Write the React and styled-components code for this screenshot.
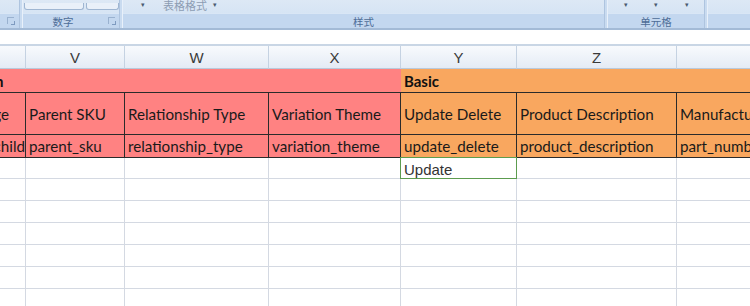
import React from "react";
import styled, { createGlobalStyle } from "styled-components";

const GlobalStyle = createGlobalStyle`
  html, body {
    margin: 0;
    padding: 0;
    background: #ffffff;
    overflow: hidden;
  }
  body {
    font-family: "Lato", "Liberation Sans", sans-serif;
  }
`;

const columns = [
  { letter: "", width: 26 },
  { letter: "V", width: 99 },
  { letter: "W", width: 144 },
  { letter: "X", width: 132 },
  { letter: "Y", width: 116 },
  { letter: "Z", width: 160 },
  { letter: "", width: 120 },
];

// the first column only shows the tail of text spilling from further left
const labels = [
  { text: "age", tail: 16, tone: "pink" },
  { text: "Parent SKU", tone: "pink" },
  { text: "Relationship Type", tone: "pink" },
  { text: "Variation Theme", tone: "pink" },
  { text: "Update Delete", tone: "orange" },
  { text: "Product Description", tone: "orange" },
  { text: "Manufacturer Part Number", tone: "orange" },
];

const keys = [
  { text: "child", tail: 0, tone: "pink" },
  { text: "parent_sku", tone: "pink" },
  { text: "relationship_type", tone: "pink" },
  { text: "variation_theme", tone: "pink" },
  { text: "update_delete", tone: "orange" },
  { text: "product_description", tone: "orange" },
  { text: "part_number", tone: "orange" },
];

const blankRows = [21, 22, 22, 22, 22, 22, 22];

const fills = {
  pink: "#ff8282",
  orange: "#f9a75f",
};

const Page = styled.div`
  width: 750px;
  height: 306px;
  overflow: hidden;
  background: #ffffff;
`;

const Ribbon = styled.div`
  display: flex;
  height: 28px;
  background: #c9dbf0;
  border-bottom: 2px solid #a3bad6;
  overflow: hidden;
`;

const Group = styled.div`
  display: flex;
  flex-direction: column;
  width: ${(p) => p.$w}px;
  flex-shrink: 0;
  margin-right: 2px;
  border-right: 1px solid #aec4df;
  border-left: ${(p) => (p.$first ? "none" : "1px solid #e8f0fa")};
  background: linear-gradient(#dde8f5, #cfe0f3);
`;

const GroupBody = styled.div`
  position: relative;
  height: 13px;
  display: flex;
  align-items: flex-end;
  padding-left: ${(p) => p.$pad || 0}px;
  gap: 2px;
  overflow: hidden;
`;

const GroupLabel = styled.div`
  height: 14px;
  display: flex;
  align-items: center;
  justify-content: center;
  padding-right: ${(p) => p.$pr || 0}px;
  position: relative;
  background: #c3d7ef;
  border-top: 1px solid #d9e6f5;
  font-family: "Noto Sans CJK SC", "Noto Sans", sans-serif;
  font-size: 10.5px;
  color: #4e6d97;
`;

const Launcher = styled.span`
  position: absolute;
  right: ${(p) => p.$r}px;
  top: 3px;
  width: 6px;
  height: 6px;
  border-left: 1px solid #8fa8c8;
  border-top: 1px solid #8fa8c8;
  opacity: 0.8;
  &::after {
    content: "";
    position: absolute;
    right: -1px;
    bottom: -1px;
    width: 3px;
    height: 3px;
    border-right: 1px solid #6f8db5;
    border-bottom: 1px solid #6f8db5;
  }
`;

const MiniBox = styled.div`
  width: ${(p) => p.$w}px;
  height: 6px;
  margin-bottom: 3px;
  border: 1px solid #9fb6d2;
  border-top: none;
  border-radius: 0 0 3px 3px;
  background: #e9f0f9;
`;

const FadedText = styled.span`
  font-family: "Noto Sans CJK SC", "Noto Sans", sans-serif;
  font-size: 11px;
  line-height: 11px;
  color: #8d9db3;
  margin-bottom: 2px;
  margin-left: ${(p) => p.$ml || 0}px;
`;

const Caret = styled.span`
  font-size: 7px;
  line-height: 7px;
  color: #4a5a70;
  position: absolute;
  top: 1px;
  left: ${(p) => p.$x}px;
`;

const Gap = styled.div`
  height: 14px;
  background: #ffffff;
  border-bottom: 2px solid #c9d6e5;
`;

const Row = styled.div`
  display: flex;
  height: ${(p) => p.$h}px;
`;

const HeaderCell = styled.div`
  box-sizing: border-box;
  flex-shrink: 0;
  width: ${(p) => p.$w}px;
  height: 100%;
  display: flex;
  align-items: center;
  justify-content: center;
  background: linear-gradient(#f8fafd, #e4ebf5);
  border-right: 1px solid #c5d2e2;
  border-bottom: 1px solid #b9c9db;
  font-family: "Liberation Sans", sans-serif;
  font-size: 15px;
  color: #3a3a3a;
`;

const Band = styled.div`
  box-sizing: border-box;
  flex-shrink: 0;
  width: ${(p) => p.$w}px;
  height: 100%;
  display: flex;
  align-items: center;
  padding-left: 3px;
  background: ${(p) => fills[p.$tone]};
  border-bottom: 1px solid #2b2b2b;
  font-weight: 700;
  font-size: 15px;
  color: #111;
  white-space: nowrap;
  overflow: hidden;
`;

const Spill = styled.span`
  margin-left: ${(p) => p.$shift}px;
`;

const Cell = styled.div`
  box-sizing: border-box;
  flex-shrink: 0;
  width: ${(p) => p.$w}px;
  height: 100%;
  display: flex;
  align-items: center;
  justify-content: ${(p) => (p.$tail !== undefined ? "flex-end" : "flex-start")};
  padding-left: ${(p) => (p.$tail !== undefined ? 0 : 3)}px;
  padding-right: ${(p) => p.$tail || 0}px;
  background: ${(p) => fills[p.$tone]};
  border-right: 1px solid #2b2b2b;
  border-bottom: 1px solid #2b2b2b;
  font-size: 15.2px;
  color: #1a1a1a;
  white-space: nowrap;
  overflow: hidden;
`;

const GridCell = styled.div`
  box-sizing: border-box;
  flex-shrink: 0;
  width: ${(p) => p.$w}px;
  height: 100%;
  display: flex;
  align-items: center;
  padding: 2px 0 0 3px;
  border-right: 1px solid #d4d9e2;
  border-bottom: 1px solid #d4d9e2;
  font-family: "Liberation Sans", sans-serif;
  font-size: 15px;
  color: #333;
`;

const ActiveCell = styled(GridCell)`
  width: ${(p) => p.$w + 1}px;
  height: calc(100% + 1px);
  margin: -1px 0 0 -1px;
  border: 1px solid #5c9c4f;
`;

const Ribbonbar = () => (
  <Ribbon>
    <Group $w={19} $first>
      <GroupBody />
      <GroupLabel>
        <Launcher $r={5} />
      </GroupLabel>
    </Group>
    <Group $w={96}>
      <GroupBody $pad={1}>
        <MiniBox $w={58} />
        <MiniBox $w={31} />
      </GroupBody>
      <GroupLabel $pr={16}>
        数字
        <Launcher $r={4} />
      </GroupLabel>
    </Group>
    <Group $w={481}>
      <GroupBody $pad={18}>
        <Caret $x={18}>▾</Caret>
        <FadedText $ml={22}>表格格式</FadedText>
        <Caret $x={90}>▾</Caret>
      </GroupBody>
      <GroupLabel>样式</GroupLabel>
    </Group>
    <Group $w={96}>
      <GroupBody>
        <Caret $x={16}>▾</Caret>
        <Caret $x={46}>▾</Caret>
        <Caret $x={77}>▾</Caret>
      </GroupBody>
      <GroupLabel>单元格</GroupLabel>
    </Group>
    <Group $w={60}>
      <GroupBody />
      <GroupLabel />
    </Group>
  </Ribbon>
);

export default function App() {
  return (
    <Page>
      <GlobalStyle />
      <Ribbonbar />
      <Gap />
      <Row $h={23}>
        {columns.map((c, i) => (
          <HeaderCell key={i} $w={c.width}>
            {c.letter}
          </HeaderCell>
        ))}
      </Row>
      <Row $h={24}>
        <Band $w={401} $tone="pink">
          <Spill $shift={-8}>n</Spill>
        </Band>
        <Band $w={400} $tone="orange">
          Basic
        </Band>
      </Row>
      <Row $h={42}>
        {labels.map((l, i) => (
          <Cell key={i} $w={columns[i].width} $tone={l.tone} $tail={l.tail}>
            {l.text}
          </Cell>
        ))}
      </Row>
      <Row $h={23}>
        {keys.map((k, i) => (
          <Cell key={i} $w={columns[i].width} $tone={k.tone} $tail={k.tail}>
            {k.text}
          </Cell>
        ))}
      </Row>
      {blankRows.map((h, r) => (
        <Row key={r} $h={h}>
          {columns.map((c, i) =>
            r === 0 && i === 4 ? (
              <ActiveCell key={i} $w={c.width}>
                Update
              </ActiveCell>
            ) : (
              <GridCell key={i} $w={c.width} />
            )
          )}
        </Row>
      ))}
    </Page>
  );
}
